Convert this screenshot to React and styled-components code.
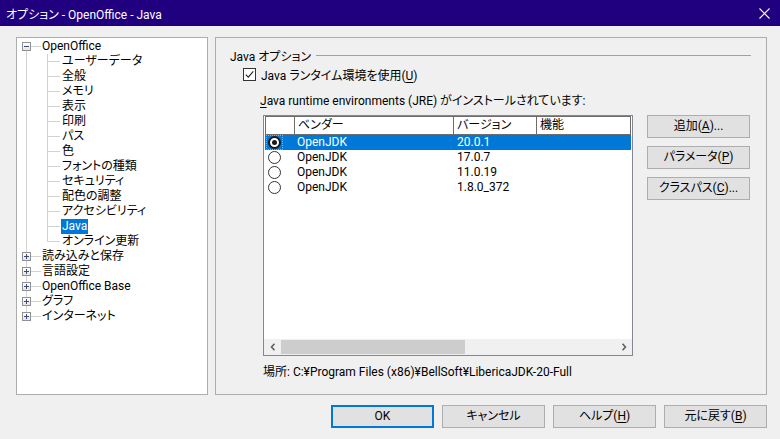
import React from 'react';
import styled, { createGlobalStyle } from 'styled-components';

const Global = createGlobalStyle`
  html, body { margin: 0; padding: 0; }
  body {
    background: #f0f0f0;
    font-family: Roboto, "Noto Sans CJK JP", sans-serif;
    font-size: 12px;
    color: #000;
    font-feature-settings: "palt";
  }
`;

const Window = styled.div`
  width: 780px;
  height: 439px;
  display: flex;
  flex-direction: column;
  background: #f0f0f0;
  overflow: hidden;
`;

const TitleBar = styled.div`
  height: 26px;
  flex: none;
  background: #20007f;
  color: #fff;
  display: flex;
  align-items: center;
  justify-content: space-between;
  padding: 0 10px 0 6px;
  font-size: 12px;
`;

const Body = styled.div`
  flex: 1;
  display: flex;
  flex-direction: column;
  padding: 11px 13px 0 16px;
`;

const Main = styled.div`
  display: flex;
  gap: 7px;
  height: 358px;
`;

const TreePanel = styled.div`
  width: 190px;
  flex: none;
  background: #fff;
  border: 1px solid #adadad;
  display: flex;
  flex-direction: column;
  padding-top: 1px;
`;

const TreeRow = styled.div`
  display: flex;
  align-items: stretch;
  height: 15px;
  line-height: 15px;
  white-space: nowrap;
`;

const line = '#d2d2d2';

const Gutter = styled.div`
  flex: none;
  width: ${p => p.$w}px;
  position: relative;
`;

const ExpBox = styled.span`
  position: absolute;
  left: 5px;
  top: 3px;
  width: 9px;
  height: 9px;
  box-sizing: border-box;
  border: 1px solid #919191;
  background: linear-gradient(#ffffff, #e4e4e4);
  display: flex;
  align-items: center;
  justify-content: center;
`;

const TreeLabel = styled.span`
  padding: 0 1px;
  margin-left: -1px;
  background: ${p => (p.$sel ? '#0078d7' : 'transparent')};
  color: ${p => (p.$sel ? '#fff' : '#000')};
`;

const RightPanel = styled.div`
  flex: 1;
  border: 1px solid #adadad;
  display: flex;
  flex-direction: column;
  padding: 9px 15px 0 14px;
`;

const Legend = styled.div`
  display: flex;
  align-items: center;
  height: 16px;
  &::after {
    content: '';
    flex: 1;
    height: 1px;
    background: #a0a0a0;
    margin-left: 5px;
  }
`;

const CheckRow = styled.div`
  display: flex;
  align-items: center;
  gap: 5px;
  height: 15px;
  margin: 4px 0 0 13px;
`;

const CheckBox = styled.span`
  width: 11px;
  height: 11px;
  border: 1px solid #333;
  background: #fff;
  display: flex;
  align-items: center;
  justify-content: center;
`;

const SubLabel = styled.div`
  height: 16px;
  line-height: 16px;
  margin: 11px 0 0 30px;
`;

const Content = styled.div`
  display: flex;
  gap: 14px;
  margin: 6px 0 0 33px;
`;

const Table = styled.div`
  width: 370px;
  height: 241px;
  box-sizing: border-box;
  border: 1px solid #828790;
  background: #fff;
  display: flex;
  flex-direction: column;
`;

const HeaderRow = styled.div`
  display: grid;
  grid-template-columns: 29px 159px 83px 1fr;
  height: 19px;
  box-sizing: border-box;
  margin: 0 1px;
  border-top: 1px solid #6d6d6d;
  border-bottom: 1px solid #6d6d6d;
  border-left: 1px solid #6d6d6d;
`;

const HeaderCell = styled.div`
  border-right: 1px solid #6d6d6d;
  padding-left: 3px;
  line-height: 17px;
`;

const Rows = styled.div`
  flex: 1;
  display: flex;
  flex-direction: column;
`;

const DataRow = styled.div`
  display: grid;
  grid-template-columns: 29px 160px 83px 1fr;
  height: 15px;
  line-height: 15px;
  margin: 0 1px;
  background: ${p => (p.$sel ? '#0078d7' : 'transparent')};
  color: ${p => (p.$sel ? '#fff' : '#000')};
`;

const RadioCell = styled.div`
  display: flex;
  align-items: center;
  padding-left: 1px;
`;

const Focus = styled.span`
  display: flex;
  align-items: center;
  justify-content: center;
  width: 17px;
  height: 15px;
  box-sizing: border-box;
  outline: ${p => (p.$on ? '1px dotted #f29a3a' : 'none')};
  outline-offset: -1px;
`;

const Radio = styled.span`
  width: 13px;
  height: 13px;
  box-sizing: border-box;
  border-radius: 50%;
  border: ${p => (p.$on ? '2px solid #1a1a1a' : '1px solid #333')};
  background: #fff;
  display: flex;
  align-items: center;
  justify-content: center;
  &::after {
    content: '';
    display: ${p => (p.$on ? 'block' : 'none')};
    width: 5px;
    height: 5px;
    border-radius: 50%;
    background: #1a1a1a;
  }
`;

const DataCell = styled.div`
  padding-left: 3px;
`;

const HScroll = styled.div`
  height: 16px;
  flex: none;
  background: #f0f0f0;
  display: flex;
  align-items: center;
  padding: 0 4px;
  gap: 4px;
`;

const Arrow = styled.span`
  width: 9px;
  display: flex;
  align-items: center;
  justify-content: center;
`;

const Track = styled.div`
  flex: 1;
  height: 14px;
  display: flex;
`;

const Thumb = styled.div`
  background: #cdcdcd;
  height: 100%;
`;

const SideButtons = styled.div`
  display: flex;
  flex-direction: column;
  gap: 8px;
`;

const Button = styled.button`
  width: 103px;
  height: 23px;
  box-sizing: border-box;
  background: #e1e1e1;
  border: ${p => (p.$def ? '2px solid #0078d7' : '1px solid #adadad')};
  font: inherit;
  font-size: 12px;
  color: #000;
  padding: 0;
  line-height: 19px;
`;

const Location = styled.div`
  height: 16px;
  line-height: 16px;
  margin: 8px 0 0 33px;
`;

const Footer = styled.div`
  display: flex;
  justify-content: flex-end;
  gap: 8px;
  margin-top: 10px;
`;

const U = styled.span`
  text-decoration: underline;
  text-underline-offset: 2px;
`;

const BoxIcon = ({ plus }) => (
  <svg width="7" height="7" viewBox="0 0 7 7">
    <rect x="1" y="3" width="5" height="1" fill="#3b4a7a" />
    {plus && <rect x="3" y="1" width="1" height="5" fill="#3b4a7a" />}
  </svg>
);

const g = (x, y, w, h) => `linear-gradient(${line}, ${line}) ${x}px ${y} / ${w}px ${h} no-repeat`;

const children = [
  'ユーザーデータ', '全般', 'メモリ', '表示', '印刷', 'パス', '色', 'フォントの種類',
  'セキュリティ', '配色の調整', 'アクセシビリティ', 'Java', 'オンライン更新',
];
const roots2 = ['読み込みと保存', '言語設定', 'OpenOffice Base', 'グラフ', 'インターネット'];

function RootRow({ label, open, first, last }) {
  const parts = [g(14, '50%', 10, '1px')];
  if (!first) parts.push(g(9, '0', 1, '4px'));
  if (!last) parts.push(g(9, '12px', 1, '3px'));
  return (
    <TreeRow>
      <Gutter $w={25} style={{ background: parts.join(', ') }}>
        <ExpBox><BoxIcon plus={!open} /></ExpBox>
      </Gutter>
      <TreeLabel>{label}</TreeLabel>
    </TreeRow>
  );
}

function ChildRow({ label, last, sel }) {
  const p1 = [g(9, '0', 1, '100%')];
  const p2 = [g(5, '0', 1, last ? '8px' : '100%'), g(5, '50%', 13, '1px')];
  return (
    <TreeRow>
      <Gutter $w={25} style={{ background: p1.join(', ') }} />
      <Gutter $w={20} style={{ background: p2.join(', ') }} />
      <TreeLabel $sel={sel}>{label}</TreeLabel>
    </TreeRow>
  );
}

const jres = [
  { v: 'OpenJDK', ver: '20.0.1', sel: true },
  { v: 'OpenJDK', ver: '17.0.7' },
  { v: 'OpenJDK', ver: '11.0.19' },
  { v: 'OpenJDK', ver: '1.8.0_372' },
];

export default function App() {
  return (
    <>
      <Global />
      <Window>
        <TitleBar>
          <span>オプション - OpenOffice - Java</span>
          <svg width="11" height="11" viewBox="0 0 11 11">
            <path d="M0.5 0.5 L10.5 10.5 M10.5 0.5 L0.5 10.5" stroke="#fff" strokeWidth="1.1" />
          </svg>
        </TitleBar>
        <Body>
          <Main>
            <TreePanel>
              <RootRow label="OpenOffice" open first />
              {children.map((c, i) => (
                <ChildRow key={c} label={c} last={i === children.length - 1} sel={c === 'Java'} />
              ))}
              {roots2.map((r, i) => (
                <RootRow key={r} label={r} last={i === roots2.length - 1} />
              ))}
            </TreePanel>
            <RightPanel>
              <Legend>Java オプション</Legend>
              <CheckRow>
                <CheckBox>
                  <svg width="9" height="9" viewBox="0 0 9 9">
                    <path d="M0.8 4.6 L3.3 7.1 L8.3 1.4" fill="none" stroke="#222" strokeWidth="1.1" />
                  </svg>
                </CheckBox>
                <span>Java ランタイム環境を使用(<U>U</U>)</span>
              </CheckRow>
              <SubLabel><U>J</U>ava runtime environments (JRE) がインストールされています:</SubLabel>
              <Content>
                <Table>
                  <HeaderRow>
                    <HeaderCell />
                    <HeaderCell>ベンダー</HeaderCell>
                    <HeaderCell>バージョン</HeaderCell>
                    <HeaderCell>機能</HeaderCell>
                  </HeaderRow>
                  <Rows>
                    {jres.map(j => (
                      <DataRow key={j.ver} $sel={j.sel}>
                        <RadioCell>
                          <Focus $on={j.sel}><Radio $on={j.sel} /></Focus>
                        </RadioCell>
                        <DataCell>{j.v}</DataCell>
                        <DataCell>{j.ver}</DataCell>
                        <DataCell />
                      </DataRow>
                    ))}
                  </Rows>
                  <HScroll>
                    <Arrow>
                      <svg width="6" height="8" viewBox="0 0 6 8"><path d="M4.5 0.8 L1.5 4 L4.5 7.2" fill="none" stroke="#606060" strokeWidth="1.6" /></svg>
                    </Arrow>
                    <Track>
                      <Thumb style={{ width: '55%' }} />
                    </Track>
                    <Arrow>
                      <svg width="6" height="8" viewBox="0 0 6 8"><path d="M1.5 0.8 L4.5 4 L1.5 7.2" fill="none" stroke="#606060" strokeWidth="1.6" /></svg>
                    </Arrow>
                  </HScroll>
                </Table>
                <SideButtons>
                  <Button>追加(<U>A</U>)...</Button>
                  <Button>パラメータ(<U>P</U>)</Button>
                  <Button>クラスパス(<U>C</U>)...</Button>
                </SideButtons>
              </Content>
              <Location>場所: C:¥Program Files (x86)¥BellSoft¥LibericaJDK-20-Full</Location>
            </RightPanel>
          </Main>
          <Footer>
            <Button $def>OK</Button>
            <Button>キャンセル</Button>
            <Button>ヘルプ(<U>H</U>)</Button>
            <Button>元に戻す(<U>B</U>)</Button>
          </Footer>
        </Body>
      </Window>
    </>
  );
}
